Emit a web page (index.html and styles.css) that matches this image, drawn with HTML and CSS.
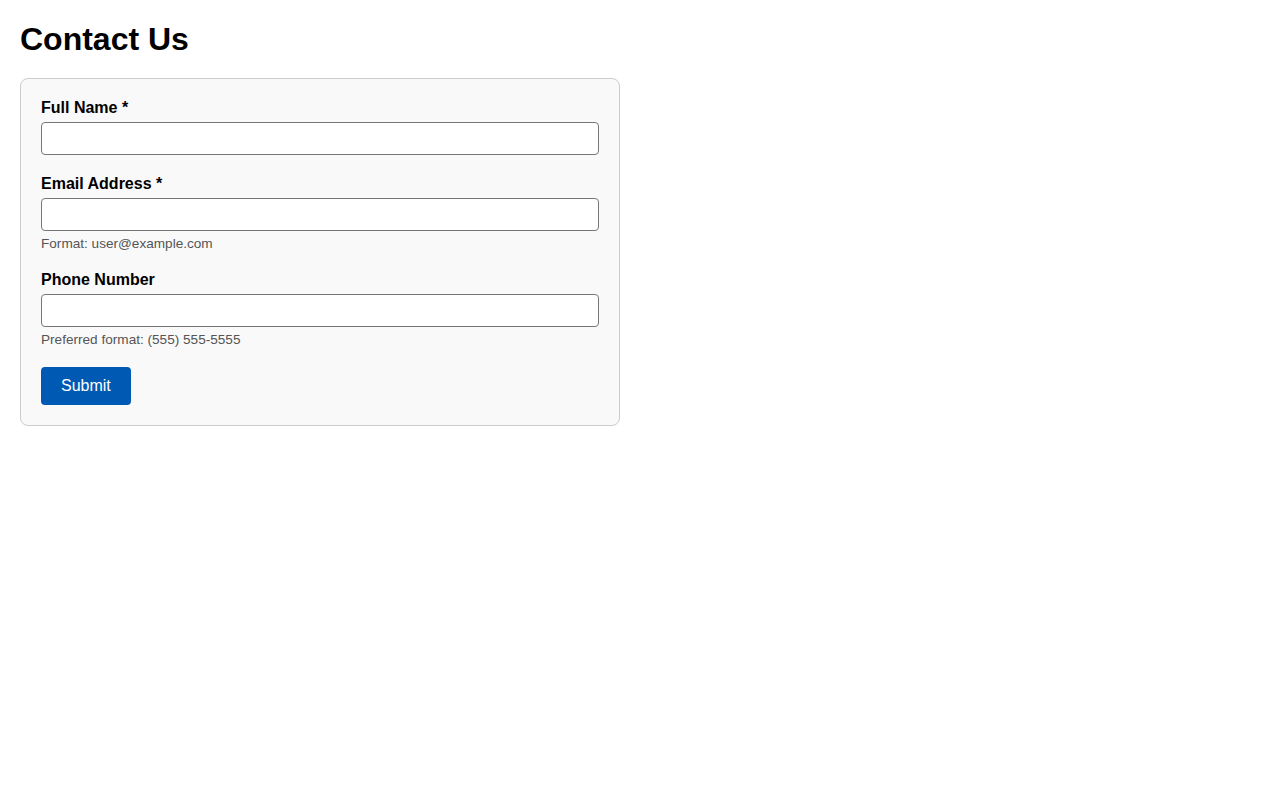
FILE: index.html
```html
<!DOCTYPE html>
<html lang="en">
<head>
<meta charset="utf-8">
<title>Contact Us</title>
<link rel="stylesheet" href="styles.css">
</head>
<body>
<h1 class="title">Contact Us</h1>
<form class="contact-form">
  <div class="field">
    <label class="label" for="name">Full Name *</label>
    <input class="input" id="name" type="text">
  </div>
  <div class="field">
    <label class="label" for="email">Email Address *</label>
    <input class="input" id="email" type="email">
    <div class="hint">Format: user@example.com</div>
  </div>
  <div class="field field-last">
    <label class="label" for="phone">Phone Number</label>
    <input class="input" id="phone" type="tel">
    <div class="hint">Preferred format: (555) 555-5555</div>
  </div>
  <button class="submit" type="button">Submit</button>
</form>
</body>
</html>
```
FILE: styles.css
```css
html, body {
  margin: 0;
  padding: 0;
  background: #ffffff;
}
body {
  padding: 20px;
  font-family: "Liberation Sans", Arial, sans-serif;
  color: #000;
}
.title {
  margin: 0 0 20px;
  font-size: 32px;
  line-height: 1.2;
  font-weight: bold;
}
.contact-form {
  width: 600px;
  box-sizing: border-box;
  background: #f9f9f9;
  border: 1px solid #cccccc;
  border-radius: 8px;
  padding: 20px;
}
.field {
  margin-bottom: 19.5px;
}
.field-last {
  margin-bottom: 18.5px;
}
.label {
  display: block;
  font-size: 16px;
  font-weight: bold;
  margin-bottom: 5px;
}
.input {
  display: block;
  width: 100%;
  height: 33px;
  box-sizing: border-box;
  margin: 0;
  padding: 6px 8px;
  border: 1px solid #767676;
  border-radius: 4px;
  background: #fff;
  font-family: inherit;
  font-size: 16px;
}
.hint {
  margin-top: 5px;
  padding-bottom: 1px;
  font-size: 13.6px;
  color: #555555;
}
.submit {
  display: block;
  margin: 0;
  padding: 10px 20px;
  border: none;
  border-radius: 4px;
  background: #005ab4;
  color: #fff;
  font-family: inherit;
  font-size: 16px;
  line-height: 18px;
  cursor: pointer;
}
```
